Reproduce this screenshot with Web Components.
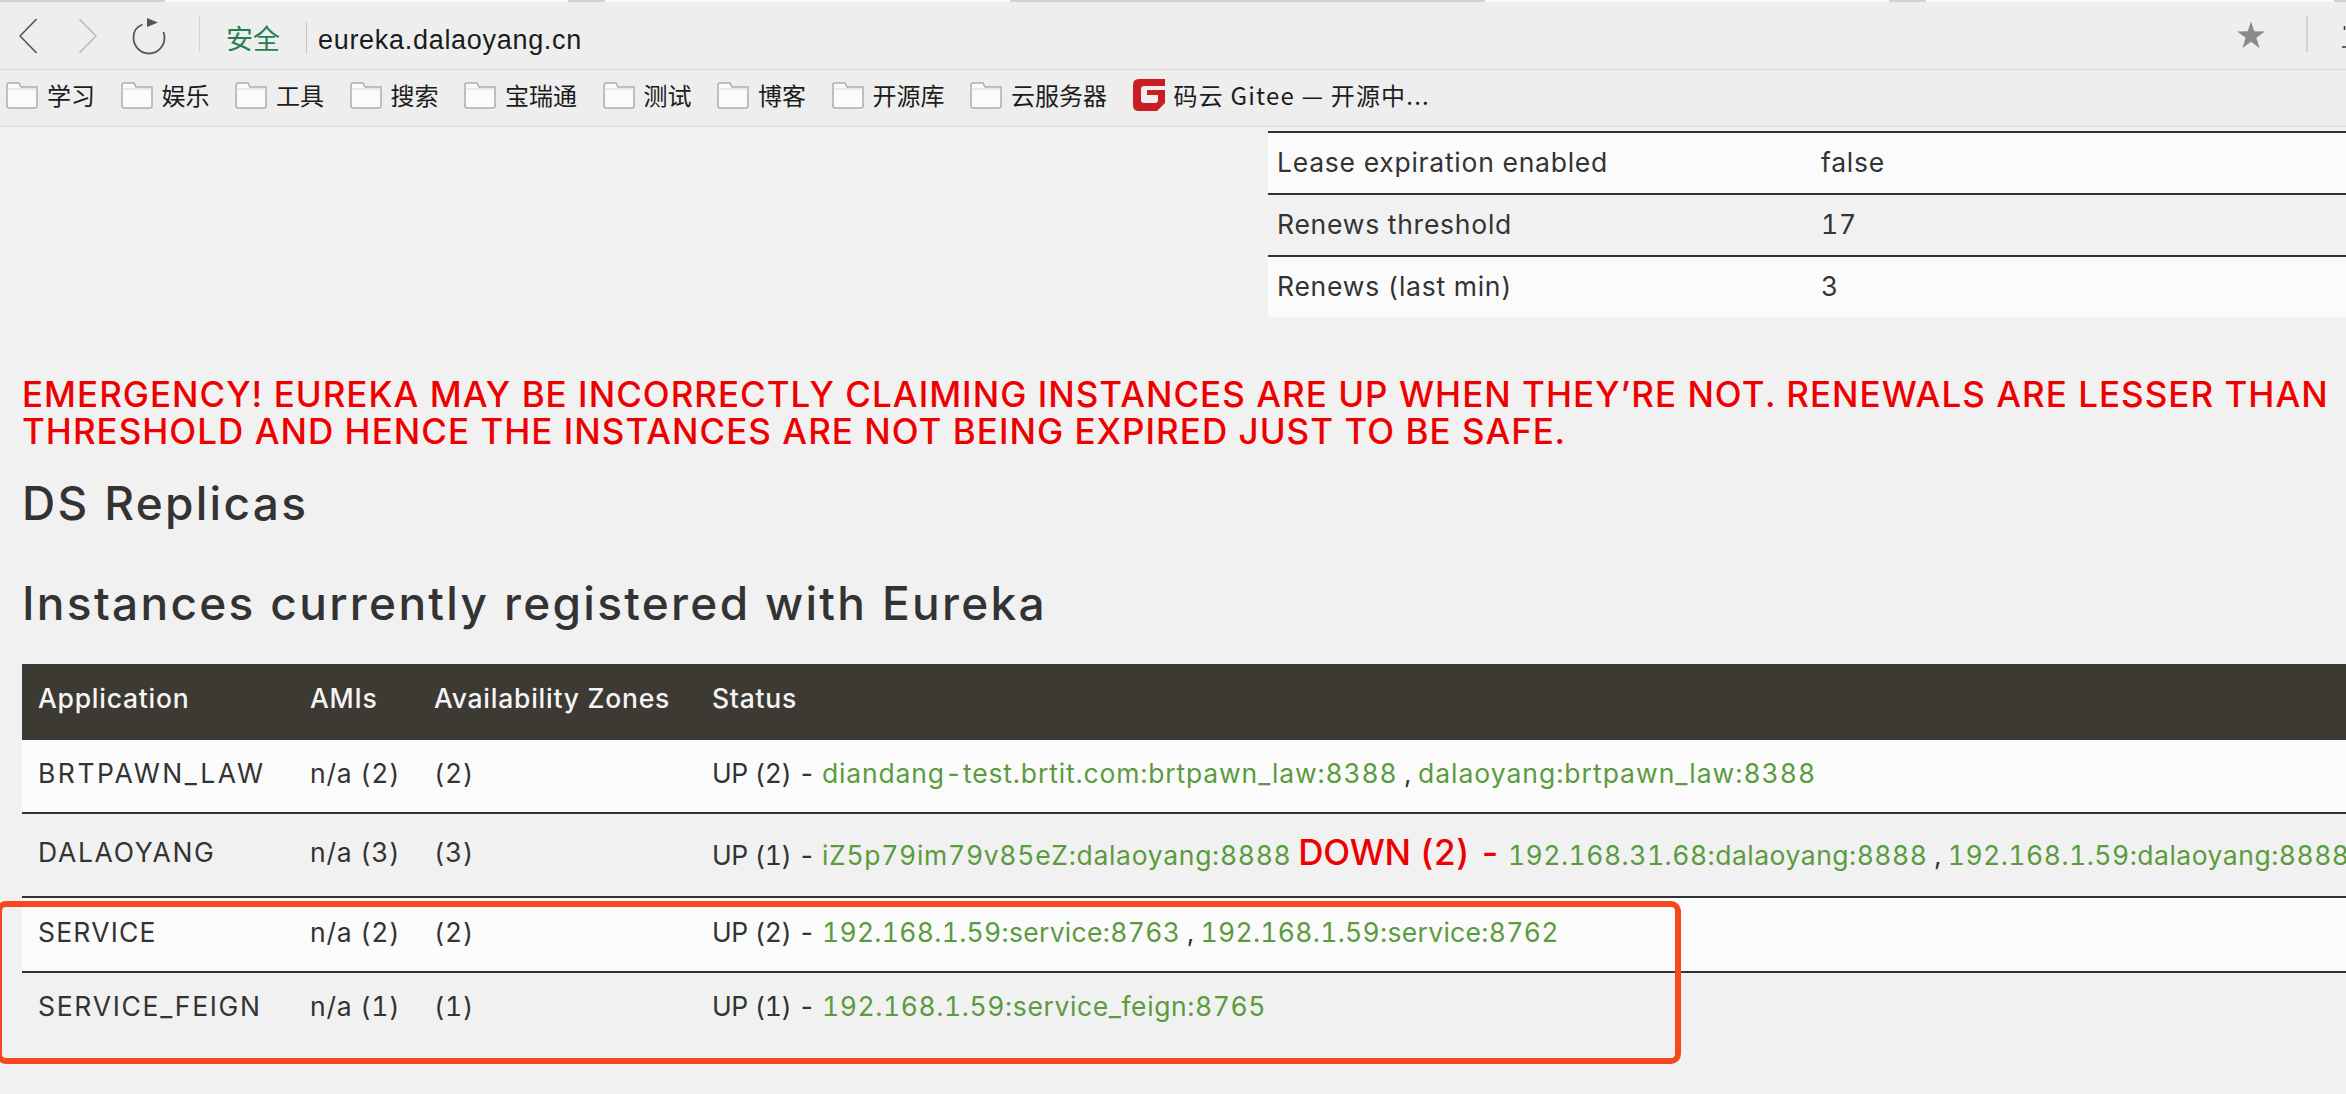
<!DOCTYPE html>
<html>
<head>
<meta charset="utf-8">
<title>eureka.dalaoyang.cn</title>
<style>
  html, body { margin: 0; height: 100%; overflow: hidden; }
  body { background: #f1f1f1; font-family: "Inter", "Noto Sans CJK SC", sans-serif; }
</style>
</head>
<body>
<browser-toolbar url="eureka.dalaoyang.cn" secure="安全"></browser-toolbar>
<bookmark-bar>
  <bookmark-item label="学习"></bookmark-item>
  <bookmark-item label="娱乐"></bookmark-item>
  <bookmark-item label="工具"></bookmark-item>
  <bookmark-item label="搜索"></bookmark-item>
  <bookmark-item label="宝瑞通"></bookmark-item>
  <bookmark-item label="测试"></bookmark-item>
  <bookmark-item label="博客"></bookmark-item>
  <bookmark-item label="开源库"></bookmark-item>
  <bookmark-item label="云服务器"></bookmark-item>
  <bookmark-item label="码云 Gitee — 开源中..." gitee style="letter-spacing:1.200px"></bookmark-item>
</bookmark-bar>
<eureka-page></eureka-page>

<script>
class BrowserToolbar extends HTMLElement {
  constructor() {
    super();
    this.attachShadow({ mode: 'open' });
  }

  connectedCallback() {
    const url = this.getAttribute('url') || '';
    const secure = this.getAttribute('secure') || '';
    this.shadowRoot.innerHTML = `
      <style>
        :host {
          display: block;
          height: 70px;
          box-sizing: border-box;
          border-bottom: 1px solid #d9d9d9;
          background: #eeeeee;
        }
        .strip {
          height: 2px;
          background: linear-gradient(90deg, #d2d2d2 165px, #fbfbfb 165px, #fbfbfb 568px, #d2d2d2 568px, #d2d2d2 605px, #fbfbfb 605px, #fbfbfb 1010px, #d2d2d2 1010px, #d2d2d2 1485px, #fbfbfb 1485px, #fbfbfb 1889px, #d2d2d2 1889px, #d2d2d2 1926px, #fbfbfb 1926px, #fbfbfb 2334px, #d2d2d2 2334px);
        }
        .bar { display: flex; align-items: flex-start; height: 67px; }
        svg { display: block; flex: none; }
        .back { margin: 16px 0 0 19px; }
        .forward { margin: 16px 0 0 42px; }
        .reload { margin: 15px 0 0 35px; }
        .sep { width: 1px; height: 36px; background: #d2d2d2; margin: 14px 0 0 33px; flex: none; }
        .secure { margin: 18px 0 0 26px; font: 27px/36px "Noto Sans CJK SC", sans-serif; color: #2a7d4f; width: 56px; flex: none; }
        .sep2 { width: 1px; height: 32px; background: #c4c4c4; margin: 20px 0 0 24px; flex: none; }
        .url { margin: 21px 0 0 11px; font: 27px/34px "Liberation Sans", sans-serif; color: #1b1b1b; letter-spacing: .7px; }
        .space { flex: 1; }
        .star-icon { margin-top: 19px; }
        .sep3 { width: 2px; height: 36px; background: #d2d2d2; margin: 14px 34px 0 41px; flex: none; }
        .edge { margin-top: 24px; }
      </style>
      <div class="strip"></div>
      <div class="bar">
        <svg class="back" width="18" height="36" viewBox="0 0 18 36"><path d="M17.500 1 1 18 17.500 35" fill="none" stroke="#555" stroke-width="1.600"/></svg>
        <svg class="forward" width="18" height="36" viewBox="0 0 18 36"><path d="M.5 1 17 18 .5 35" fill="none" stroke="#bdbdbd" stroke-width="1.600"/></svg>
        <svg class="reload" width="34" height="38" viewBox="0 0 34 38"><path d="M10.500 7.500C5 9.500 1.500 14.500 1.500 20.500 1.500 29.500 8.500 36.500 17 36.500S32.500 29.500 32.500 20.500C32.500 18.500 32 16.500 31.400 15" fill="none" stroke="#555" stroke-width="1.800"/><path d="M15 1 26 5.500 15 10Z" fill="#555"/></svg>
        <div class="sep"></div>
        <div class="secure">${secure}</div>
        <div class="sep2"></div>
        <div class="url">${url}</div>
        <div class="space"></div>
        <svg class="star-icon" width="28" height="28" viewBox="0 0 28 28"><path d="M14 .5 17.300 10.300 27.800 10.500 19.400 16.800 22.500 27 14 20.800 5.500 27 8.600 16.800 .2 10.500 10.700 10.300Z" fill="#8a8a8a"/></svg>
        <div class="sep3"></div>
        <svg class="edge" width="4" height="24"><path d="M2.500 0V4M0 21H4" stroke="#333" stroke-width="1.500"/></svg>
      </div>
    `;
  }
}

class BookmarkBar extends HTMLElement {
  constructor() {
    super();
    this.attachShadow({ mode: 'open' });
    this.shadowRoot.innerHTML = `
      <style>
        :host {
          display: flex;
          align-items: center;
          gap: 25.500px;
          height: 57px;
          padding: 0 0 6px 6px;
          box-sizing: border-box;
          border-bottom: 1px solid #d9d9d9;
          background: #eeeeee;
          overflow: hidden;
        }
      </style>
      <slot></slot>
    `;
  }
}

class BookmarkItem extends HTMLElement {
  constructor() {
    super();
    this.attachShadow({ mode: 'open' });
  }

  connectedCallback() {
    const label = this.getAttribute('label') || '';
    const icon = this.hasAttribute('gitee')
      ? `<svg width="32" height="32" viewBox="0 0 32 32"><path d="M6 0H32V7H11Q8 7 8 10V21Q8 24 11 24H22Q25 24 25 21V16H14V11H32V24L24 32H6Q0 32 0 26V6Q0 0 6 0Z" fill="#c71d23"/></svg>`
      : `<svg width="32" height="27" viewBox="0 0 32 27"><path d="M1 3Q1 1 3 1H13L15 5H31V24Q31 26 29 26H3Q1 26 1 24Z" fill="#fbfbfb" stroke="#adadad" stroke-width="1.500"/><path d="M1.500 7H30.500" stroke="#dcdcdc" stroke-width="1.200"/></svg>`;
    this.shadowRoot.innerHTML = `
      <style>
        :host { display: flex; align-items: center; gap: 9px; }
        svg { display: block; flex: none; }
        span { font: 24px/30px "Noto Sans CJK SC", sans-serif; color: #1c1c1c; white-space: nowrap; }
      </style>
      ${icon}<span>${label}</span>
    `;
  }
}

class InfoTable extends HTMLElement {
  constructor() {
    super();
    this.attachShadow({ mode: 'open' });
  }

  connectedCallback() {
    const rows = JSON.parse(this.getAttribute('data-rows')) || [];
    this.shadowRoot.innerHTML = `
      <style>
        :host {
          display: block;
          margin-left: 1268px;
          border-top: 2px solid #333;
          font-size: var(--text-size);
          letter-spacing: var(--text-spacing);
          color: #333;
        }
        .row { display: grid; grid-template-columns: 544px 1fr; height: 57px; padding: 0 0 3px 9px; align-items: center; }
        .row + .row { border-top: 2px solid #333; }
        .row:nth-of-type(odd) { background: #fbfbfb; }
      </style>
      ${rows.map((row) => `<div class="row"><div>${row[0]}</div><div>${row[1]}</div></div>`).join('')}
    `;
  }
}

class InstanceTable extends HTMLElement {
  constructor() {
    super();
    this.attachShadow({ mode: 'open' });
    this.shadowRoot.innerHTML = `
      <style>
        :host {
          display: block;
          margin-left: 22px;
          color: #333;
          font-size: var(--text-size);
          letter-spacing: var(--text-spacing);
        }
        .head {
          display: grid;
          grid-template-columns: 272px 124px 278px 1fr;
          height: 67px;
          align-items: center;
          padding: 0 0 9px 16px;
          background: #3d3a34;
          color: #f5f5f5;
          font-weight: 500;
        }
      </style>
      <div class="head"><div>Application</div><div>AMIs</div><div>Availability Zones</div><div>Status</div></div>
      <slot></slot>
    `;
  }
}

class InstanceRow extends HTMLElement {
  constructor() {
    super();
    this.attachShadow({ mode: 'open' });
    this.shadowRoot.innerHTML = `
      <style>
        :host {
          display: grid;
          grid-template-columns: 272px 124px 278px 1fr;
          align-items: center;
          height: var(--row-height, 72px);
          padding-left: 16px;
          padding-bottom: var(--row-pad, 6px);
          box-sizing: border-box;
          background: var(--row-bg, transparent);
          border-top: var(--row-border, 2px solid #333);
          white-space: nowrap;
        }
        .app { letter-spacing: var(--app-spacing, 1.700px); }
        .status { letter-spacing: -.35px; }
      </style>
      <div class="app"><slot name="app"></slot></div>
      <div><slot name="amis"></slot></div>
      <div><slot name="zones"></slot></div>
      <div class="status"><slot name="status"></slot></div>
    `;
  }
}

class EurekaPage extends HTMLElement {
  constructor() {
    super();
    this.attachShadow({ mode: 'open' });
  }

  connectedCallback() {
    // glyph widths differ from the original font, so each address gets its own tracking
    const link = (text, spacing) => `<a style="letter-spacing:${spacing}px">${text}</a>`;
    const row = (app, amis, zones, status, style) => `
      <instance-row style="${style}">
        <span slot="app">${app}</span>
        <span slot="amis">${amis}</span>
        <span slot="zones">${zones}</span>
        <span slot="status">${status}</span>
      </instance-row>`;

    this.shadowRoot.innerHTML = `
      <style>
        :host {
          display: block;
          position: relative;
          --text-size: 26.500px;
          --text-spacing: .75px;
          font-family: "Inter", sans-serif;
          font-variant-numeric: tabular-nums;
          color: #333;
          padding-top: 4px;
        }
        .warn {
          margin: 59px 0 0 22px;
          font-size: 35px;
          line-height: 37px;
          letter-spacing: 1px;
          color: #ef0000;
          font-weight: 500;
        }
        h2 { margin: 0 0 0 22px; font-weight: 500; font-size: 46px; letter-spacing: 2.300px; line-height: 56px; color: #333; }
        .replicas { margin-top: 25px; }
        .instances { margin-top: 44px; margin-bottom: 33px; }
        a { color: #5a9b3e; }
        .down { color: #ef0000; font-size: 35px; font-weight: 500; letter-spacing: -.2px; }
        .mark {
          position: absolute;
          left: -4px;
          top: 774px;
          width: 1685px;
          height: 163px;
          box-sizing: border-box;
          border: 6px solid #f4481f;
          border-radius: 10px;
        }
      </style>
      <info-table data-rows='[["Lease expiration enabled","false"],["Renews threshold","17"],["Renews (last min)","3"]]'></info-table>
      <div class="warn">EMERGENCY! EUREKA MAY BE INCORRECTLY CLAIMING INSTANCES ARE UP WHEN THEY’RE NOT. RENEWALS ARE LESSER THAN THRESHOLD AND HENCE THE INSTANCES ARE NOT BEING EXPIRED JUST TO BE SAFE.</div>
      <h2 class="replicas">DS Replicas</h2>
      <h2 class="instances">Instances currently registered with Eureka</h2>
      <instance-table>
        ${row('BRTPAWN_LAW', 'n/a (2)', '(2)', `UP (2) - ${link('diandang-test.brtit.com:brtpawn_law:8388', 0.85)} , ${link('dalaoyang:brtpawn_law:8388', 1)}`, '--row-bg:#fbfbfb;--row-border:0;--app-spacing:2.500px')}
        ${row('DALAOYANG', 'n/a (3)', '(3)', `UP (1) - ${link('iZ5p79im79v85eZ:dalaoyang:8888', 0.7)} <span class="down">DOWN (2) -</span> ${link('192.168.31.68:dalaoyang:8888', 0.5)} , ${link('192.168.1.59:dalaoyang:8888', 0.5)}`, '--row-height:84px')}
        ${row('SERVICE', 'n/a (2)', '(2)', `UP (2) - ${link('192.168.1.59:service:8763', 0.3)} , ${link('192.168.1.59:service:8762', 0.3)}`, '--row-bg:#fbfbfb;--row-height:75px;--app-spacing:1.200px')}
        ${row('SERVICE_FEIGN', 'n/a (1)', '(1)', `UP (1) - ${link('192.168.1.59:service_feign:8765', 0.6)}`, '--row-height:122px;--row-pad:54px')}
      </instance-table>
      <div class="mark"></div>
    `;
  }
}

customElements.define('browser-toolbar', BrowserToolbar);
customElements.define('bookmark-bar', BookmarkBar);
customElements.define('bookmark-item', BookmarkItem);
customElements.define('info-table', InfoTable);
customElements.define('instance-table', InstanceTable);
customElements.define('instance-row', InstanceRow);
customElements.define('eureka-page', EurekaPage);
</script>
</body>
</html>
